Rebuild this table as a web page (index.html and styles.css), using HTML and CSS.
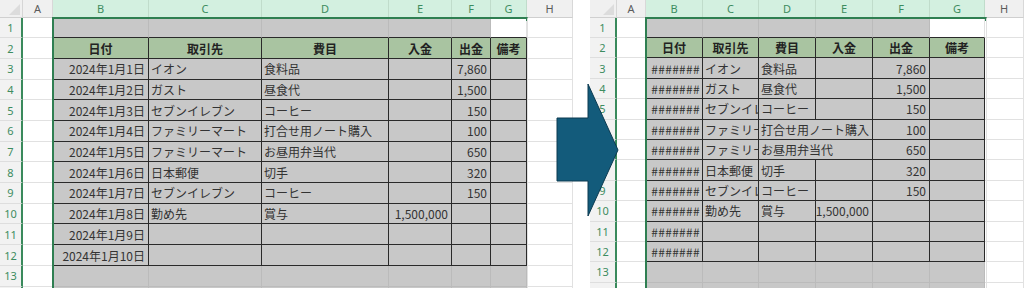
FILE: index.html
```html
<!DOCTYPE html>
<html lang="ja">
<head>
<meta charset="utf-8">
<link rel="stylesheet" href="styles.css">
</head>
<body>
<div class="page">
  <div class="sheet left">
    <div class="corner"></div><div class="ch">A</div><div class="ch sel">B</div><div class="ch sel">C</div><div class="ch sel">D</div><div class="ch sel">E</div><div class="ch sel">F</div><div class="ch sel">G</div><div class="ch">H</div>

    <div class="rh">1</div><div class="c"></div><div class="g top"></div><div class="g top"></div><div class="g top"></div><div class="g top"></div><div class="g top"></div><div class="c top"></div><div class="c"></div>

    <div class="rh">2</div><div class="c"></div><div class="h">日付</div><div class="h">取引先</div><div class="h">費目</div><div class="h">入金</div><div class="h">出金</div><div class="h">備考</div><div class="c"></div>

    <div class="rh">3</div><div class="c"></div><div class="t r">2024年1月1日</div><div class="t">イオン</div><div class="t">食料品</div><div class="t"></div><div class="t r">7,860</div><div class="t"></div><div class="c"></div>

    <div class="rh">4</div><div class="c"></div><div class="t r">2024年1月2日</div><div class="t">ガスト</div><div class="t">昼食代</div><div class="t"></div><div class="t r">1,500</div><div class="t"></div><div class="c"></div>

    <div class="rh">5</div><div class="c"></div><div class="t r">2024年1月3日</div><div class="t">セブンイレブン</div><div class="t">コーヒー</div><div class="t"></div><div class="t r">150</div><div class="t"></div><div class="c"></div>

    <div class="rh">6</div><div class="c"></div><div class="t r">2024年1月4日</div><div class="t">ファミリーマート</div><div class="t">打合せ用ノート購入</div><div class="t"></div><div class="t r">100</div><div class="t"></div><div class="c"></div>

    <div class="rh">7</div><div class="c"></div><div class="t r">2024年1月5日</div><div class="t">ファミリーマート</div><div class="t">お昼用弁当代</div><div class="t"></div><div class="t r">650</div><div class="t"></div><div class="c"></div>

    <div class="rh">8</div><div class="c"></div><div class="t r">2024年1月6日</div><div class="t">日本郵便</div><div class="t">切手</div><div class="t"></div><div class="t r">320</div><div class="t"></div><div class="c"></div>

    <div class="rh">9</div><div class="c"></div><div class="t r">2024年1月7日</div><div class="t">セブンイレブン</div><div class="t">コーヒー</div><div class="t"></div><div class="t r">150</div><div class="t"></div><div class="c"></div>

    <div class="rh">10</div><div class="c"></div><div class="t r">2024年1月8日</div><div class="t">勤め先</div><div class="t">賞与</div><div class="t r">1,500,000</div><div class="t"></div><div class="t"></div><div class="c"></div>

    <div class="rh">11</div><div class="c"></div><div class="t r">2024年1月9日</div><div class="t"></div><div class="t"></div><div class="t"></div><div class="t"></div><div class="t"></div><div class="c"></div>

    <div class="rh">12</div><div class="c"></div><div class="t r">2024年1月10日</div><div class="t"></div><div class="t"></div><div class="t"></div><div class="t"></div><div class="t"></div><div class="c"></div>

    <div class="rh">13</div><div class="c"></div><div class="g"></div><div class="g"></div><div class="g"></div><div class="g"></div><div class="g"></div><div class="g"></div><div class="c"></div>

    <div class="rh"></div><div class="c"></div><div class="g"></div><div class="g"></div><div class="g"></div><div class="g"></div><div class="g"></div><div class="g"></div><div class="c"></div>

    <div class="selection sel-left"><span class="handle"></span></div>
  </div>

  <div class="sheet right">
    <div class="corner"></div><div class="ch">A</div><div class="ch sel">B</div><div class="ch sel">C</div><div class="ch sel">D</div><div class="ch sel">E</div><div class="ch sel">F</div><div class="ch sel">G</div><div class="ch">H</div>

    <div class="rh">1</div><div class="c"></div><div class="g top"></div><div class="g top"></div><div class="g top"></div><div class="g top"></div><div class="g top"></div><div class="c top"></div><div class="c"></div>

    <div class="rh">2</div><div class="c"></div><div class="h">日付</div><div class="h">取引先</div><div class="h">費目</div><div class="h">入金</div><div class="h">出金</div><div class="h">備考</div><div class="c"></div>

    <div class="rh">3</div><div class="c"></div><div class="t r hash">#######</div><div class="t">イオン</div><div class="t">食料品</div><div class="t"></div><div class="t r">7,860</div><div class="t"></div><div class="c"></div>

    <div class="rh">4</div><div class="c"></div><div class="t r hash">#######</div><div class="t">ガスト</div><div class="t">昼食代</div><div class="t"></div><div class="t r">1,500</div><div class="t"></div><div class="c"></div>

    <div class="rh">5</div><div class="c"></div><div class="t r hash">#######</div><div class="t">セブンイレブン</div><div class="t">コーヒー</div><div class="t"></div><div class="t r">150</div><div class="t"></div><div class="c"></div>

    <div class="rh">6</div><div class="c"></div><div class="t r hash">#######</div><div class="t">ファミリーマート</div><div class="t sp">打合せ用ノート購入</div><div class="t r">100</div><div class="t"></div><div class="c"></div>

    <div class="rh">7</div><div class="c"></div><div class="t r hash">#######</div><div class="t">ファミリーマート</div><div class="t sp">お昼用弁当代</div><div class="t r">650</div><div class="t"></div><div class="c"></div>

    <div class="rh">8</div><div class="c"></div><div class="t r hash">#######</div><div class="t">日本郵便</div><div class="t">切手</div><div class="t"></div><div class="t r">320</div><div class="t"></div><div class="c"></div>

    <div class="rh">9</div><div class="c"></div><div class="t r hash">#######</div><div class="t">セブンイレブン</div><div class="t">コーヒー</div><div class="t"></div><div class="t r">150</div><div class="t"></div><div class="c"></div>

    <div class="rh">10</div><div class="c"></div><div class="t r hash">#######</div><div class="t">勤め先</div><div class="t">賞与</div><div class="t r">1,500,000</div><div class="t"></div><div class="t"></div><div class="c"></div>

    <div class="rh">11</div><div class="c"></div><div class="t r hash">#######</div><div class="t"></div><div class="t"></div><div class="t"></div><div class="t"></div><div class="t"></div><div class="c"></div>

    <div class="rh">12</div><div class="c"></div><div class="t r hash">#######</div><div class="t"></div><div class="t"></div><div class="t"></div><div class="t"></div><div class="t"></div><div class="c"></div>

    <div class="rh">13</div><div class="c"></div><div class="g"></div><div class="g"></div><div class="g"></div><div class="g"></div><div class="g"></div><div class="g"></div><div class="c"></div>

    <div class="rh"></div><div class="c"></div><div class="g"></div><div class="g"></div><div class="g"></div><div class="g"></div><div class="g"></div><div class="g"></div><div class="c"></div>

    <div class="selection sel-right"><span class="handle"></span></div>
  </div>
</div>

<svg class="arrow" width="1024" height="288" viewBox="0 0 1024 288" aria-hidden="true">
  <polygon points="557,118 588,118 588,84 618,150 588,216 588,181 557,181" fill="#135b7b" stroke="#0c3a50" stroke-width="1"/>
</svg>
</body>
</html>
```

FILE: styles.css
```css
* {
  box-sizing: border-box;
  margin: 0;
  padding: 0;
}

body {
  width: 1024px;
  height: 288px;
  overflow: hidden;
  background: #ffffff;
  font-family: "Noto Sans CJK JP", "Noto Sans", sans-serif;
  position: relative;
}

.page {
  display: flex;
  gap: 17px;
  height: 288px;
}

.sheet {
  position: relative;
  display: grid;
  align-content: start;
  height: 288px;
  overflow: hidden;
}

.left {
  width: 573px;
  grid-template-columns: 23px 30px 96px 113px 127px 63px 39px 36px 46px;
  grid-template-rows: 17.6px repeat(14, 20.7px);
}

.right {
  width: 434px;
  grid-template-columns: 27px 29px 57px 56px 57px 57px 57px 55px 39px;
  grid-template-rows: 17.6px repeat(14, 20.4px);
}

.sheet > div {
  display: flex;
  align-items: center;
  white-space: nowrap;
  overflow: hidden;
  font-size: 12px;
  color: #333333;
  padding: 0 2px;
  border-right: 1px solid #e1e1e1;
  border-bottom: 1px solid #e1e1e1;
}

.sheet > .corner {
  background: #f0f0f0;
  border-right: 1px solid #d6d6d6;
  border-bottom: 1px solid #d0d0d0;
  position: relative;
}

.corner::after {
  content: "";
  position: absolute;
  right: 2px;
  bottom: 2px;
  border-left: 11px solid transparent;
  border-bottom: 11px solid #dcdcdc;
}

.sheet > .ch {
  justify-content: center;
  font-family: "Noto Sans", sans-serif;
  font-size: 11px;
  color: #5b5b5b;
  background: #f0f0f0;
  border-right: 1px solid #d8d8d8;
  border-bottom: 1px solid #cfcfcf;
}

.sheet > .ch.sel {
  background: #d3f0e0;
  color: #3d8c5f;
  border-right: 1px solid #c0dccb;
  border-bottom: 1px solid #3a8a5c;
}

.sheet > .rh {
  justify-content: center;
  font-family: "Noto Sans", sans-serif;
  font-size: 11px;
  color: #3d8c5f;
  background: #f2f2f2;
  border-bottom: 1px solid #dedede;
  border-right: 2px solid #3a8a5c;
}

.sheet > .g {
  background: #c8c8c8;
  border-color: #bbbbbb;
}

.sheet > .t {
  background: #c8c8c8;
  border-color: #2a2a2a;
}

.sheet > .h {
  background: #a9c4a1;
  border-color: #2a2a2a;
  justify-content: center;
  font-weight: bold;
  color: #222222;
}

.sheet > .top {
  border-bottom-color: #2a2a2a;
}

.sheet > .r {
  justify-content: flex-end;
  padding-right: 3px;
}

.sheet > .hash {
  padding-right: 2px;
  letter-spacing: 0.3px;
}

.sheet > .sp {
  grid-column: span 2;
}

.selection {
  position: absolute;
  top: 17px;
  height: 300px;
  border: 2px solid #2f7f52;
}

.sel-left {
  left: 52px;
  width: 476px;
}

.sel-right {
  left: 55px;
  width: 342px;
}

.handle {
  position: absolute;
  right: -3px;
  top: -2px;
  width: 4px;
  height: 4px;
  background: #2f7f52;
}

.arrow {
  position: absolute;
  left: 0;
  top: 0;
  pointer-events: none;
}
```
